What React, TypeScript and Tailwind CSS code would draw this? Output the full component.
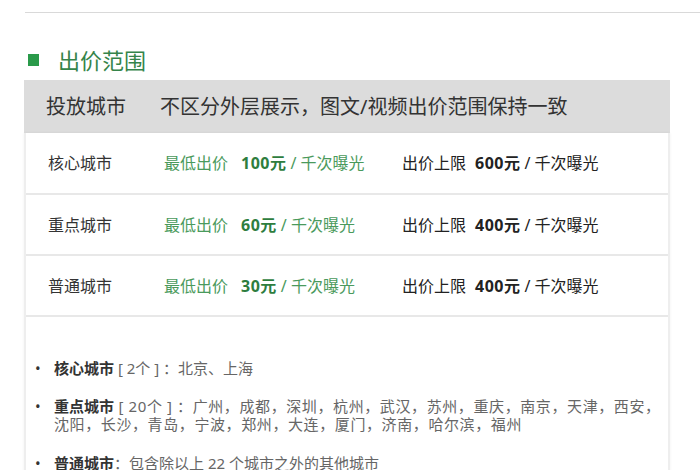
import React from "react";

const font = { fontFamily: '"Noto Sans", "Noto Sans CJK SC", sans-serif' };

type Row = { name: string; min: string; max: string };
const rows: Row[] = [
  { name: "核心城市", min: "100元", max: "600元" },
  { name: "重点城市", min: "60元", max: "400元" },
  { name: "普通城市", min: "30元", max: "400元" },
];

export default function App() {
  return (
    <div className="w-[700px] h-[470px] overflow-hidden bg-white" style={font}>
      <div className="pt-[12px] pl-[25px]">
        <div className="h-px bg-[#d9d9d9]" />
      </div>
      <div className="mt-[33px] ml-[28px] h-[28px] flex items-center">
        <span className="w-[11px] h-[12px] bg-[#2a9a4a]" />
        <span className="ml-[19px] text-[22px] leading-[28px] text-[#35844a]">出价范围</span>
      </div>
      <div className="mt-[6px] ml-[24px] w-[646px]">
        <div className="h-[53px] bg-[#dcdcdc] flex items-center pl-[22px] text-[20px] text-[#333]">
          <span className="w-[114px]">投放城市</span>
          <span>不区分外层展示，图文/视频出价范围保持一致</span>
        </div>
        <div className="border-x-2 border-[#eeeeee] shadow-[0_0_3px_rgba(0,0,0,0.06)]">
          {rows.map((r, i) => (
            <div
              key={r.name}
              className={`${i === 0 ? "h-[62px]" : "h-[61px]"} flex items-center border-b-2 border-[#e8e8e8] pl-[22px] text-[16px]`}
            >
              <span className="w-[116px] text-[#333]">{r.name}</span>
              <span className="w-[238px] text-[#4a9a5c]">
                最低出价
                <span className="ml-[13px] font-bold text-[#2e7d3e] tracking-[0.5px]">{r.min}</span>
                <span className="ml-[4px]">/ 千次曝光</span>
              </span>
              <span className="text-[#222]">
                出价上限
                <span className="ml-[9px] font-bold tracking-[0.5px]">{r.max}</span>
                <span className="ml-[4px]">/ 千次曝光</span>
              </span>
            </div>
          ))}
          <div className="pt-[42px] pb-[20px] pl-[9px] text-[15px] leading-[18px] text-[#666]">
            <div className="flex">
              <span className="w-[19px] text-[#333]">•</span>
              <span>
                <span className="font-bold text-[#333]">核心城市</span> [ 2个 ] ：北京、上海
              </span>
            </div>
            <div className="flex mt-[20px]">
              <span className="w-[19px] text-[#333]">•</span>
              <span className="tracking-[0.6px]">
                <span className="font-bold text-[#333] tracking-normal">重点城市</span> [ 20个 ] ：广州，成都，深圳，杭州，武汉，苏州，重庆，南京，天津，西安，
                <br />
                沈阳，长沙，青岛，宁波，郑州，大连，厦门，济南，哈尔滨，福州
              </span>
            </div>
            <div className="flex mt-[21px]">
              <span className="w-[19px] text-[#333]">•</span>
              <span>
                <span className="font-bold text-[#333]">普通城市</span>：包含除以上 22 个城市之外的其他城市
              </span>
            </div>
          </div>
        </div>
      </div>
    </div>
  );
}
